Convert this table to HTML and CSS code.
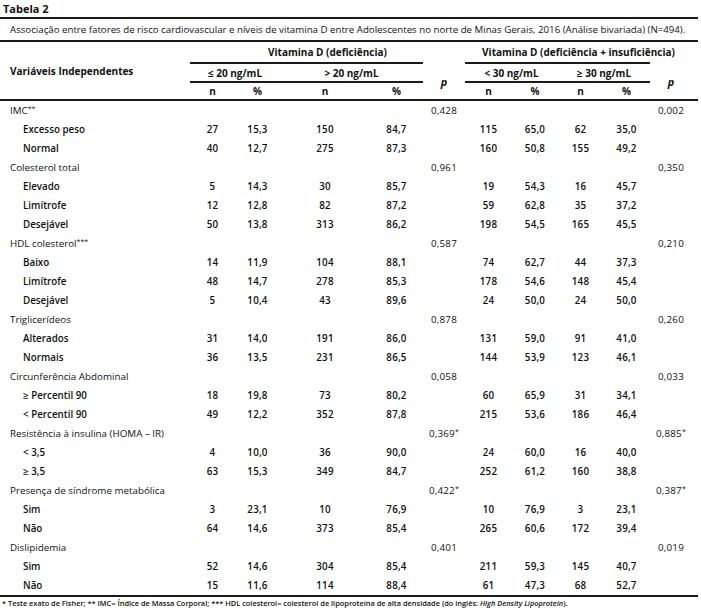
FILE: index.html
```html
<!DOCTYPE html>
<html lang="pt">
<head>
<meta charset="utf-8">
<title>Tabela 2</title>
<link rel="stylesheet" href="styles.css">
</head>
<body>
<div class="page">
  <div class="title">Tabela 2</div>
  <table class="tbl">
    <colgroup>
      <col class="c-lab"><col class="c-n1"><col class="c-p1"><col class="c-n2"><col class="c-p2"><col class="c-pv1">
      <col class="c-n3"><col class="c-p3"><col class="c-n4"><col class="c-p4"><col class="c-pv2">
    </colgroup>
    <thead>
      <tr class="cap"><th colspan="11">Associação entre fatores de risco cardiovascular e níveis de vitamina D entre Adolescentes no norte de Minas Gerais, 2016 (Análise bivariada) (N=494).</th></tr>
      <tr class="h1">
        <th rowspan="3" class="var">Variáveis Independentes</th>
        <th colspan="5">Vitamina D (deficiência)</th>
        <th colspan="5" class="last">Vitamina D (deficiência + insuficiência)</th>
      </tr>
      <tr class="h2">
        <th colspan="2" class="grp">≤ 20 ng/mL</th>
        <th colspan="2" class="grp">&gt; 20 ng/mL</th>
        <th rowspan="2" class="pcol">p</th>
        <th colspan="2" class="grp">&lt; 30 ng/mL</th>
        <th colspan="2" class="grp">≥ 30 ng/mL</th>
        <th rowspan="2" class="pcol last">p</th>
      </tr>
      <tr class="h3">
        <th>n</th><th>%</th><th>n</th><th>%</th>
        <th>n</th><th>%</th><th>n</th><th>%</th>
      </tr>
    </thead>
    <tbody>
      <tr class="cat"><td class="lab">IMC<sup>**</sup></td><td></td><td></td><td></td><td></td><td>0,428</td><td></td><td></td><td></td><td></td><td class="last">0,002</td></tr>
      <tr class="sub"><td class="lab">Excesso peso</td><td>27</td><td>15,3</td><td>150</td><td>84,7</td><td></td><td>115</td><td>65,0</td><td>62</td><td>35,0</td><td class="last"></td></tr>
      <tr class="sub"><td class="lab">Normal</td><td>40</td><td>12,7</td><td>275</td><td>87,3</td><td></td><td>160</td><td>50,8</td><td>155</td><td>49,2</td><td class="last"></td></tr>

      <tr class="cat"><td class="lab">Colesterol total</td><td></td><td></td><td></td><td></td><td>0,961</td><td></td><td></td><td></td><td></td><td class="last">0,350</td></tr>
      <tr class="sub"><td class="lab">Elevado</td><td>5</td><td>14,3</td><td>30</td><td>85,7</td><td></td><td>19</td><td>54,3</td><td>16</td><td>45,7</td><td class="last"></td></tr>
      <tr class="sub"><td class="lab">Limítrofe</td><td>12</td><td>12,8</td><td>82</td><td>87,2</td><td></td><td>59</td><td>62,8</td><td>35</td><td>37,2</td><td class="last"></td></tr>
      <tr class="sub"><td class="lab">Desejável</td><td>50</td><td>13,8</td><td>313</td><td>86,2</td><td></td><td>198</td><td>54,5</td><td>165</td><td>45,5</td><td class="last"></td></tr>

      <tr class="cat"><td class="lab">HDL colesterol<sup>***</sup></td><td></td><td></td><td></td><td></td><td>0,587</td><td></td><td></td><td></td><td></td><td class="last">0,210</td></tr>
      <tr class="sub"><td class="lab">Baixo</td><td>14</td><td>11,9</td><td>104</td><td>88,1</td><td></td><td>74</td><td>62,7</td><td>44</td><td>37,3</td><td class="last"></td></tr>
      <tr class="sub"><td class="lab">Limítrofe</td><td>48</td><td>14,7</td><td>278</td><td>85,3</td><td></td><td>178</td><td>54,6</td><td>148</td><td>45,4</td><td class="last"></td></tr>
      <tr class="sub"><td class="lab">Desejável</td><td>5</td><td>10,4</td><td>43</td><td>89,6</td><td></td><td>24</td><td>50,0</td><td>24</td><td>50,0</td><td class="last"></td></tr>

      <tr class="cat"><td class="lab">Triglicerídeos</td><td></td><td></td><td></td><td></td><td>0,878</td><td></td><td></td><td></td><td></td><td class="last">0,260</td></tr>
      <tr class="sub"><td class="lab">Alterados</td><td>31</td><td>14,0</td><td>191</td><td>86,0</td><td></td><td>131</td><td>59,0</td><td>91</td><td>41,0</td><td class="last"></td></tr>
      <tr class="sub"><td class="lab">Normais</td><td>36</td><td>13,5</td><td>231</td><td>86,5</td><td></td><td>144</td><td>53,9</td><td>123</td><td>46,1</td><td class="last"></td></tr>

      <tr class="cat"><td class="lab">Circunferência Abdominal</td><td></td><td></td><td></td><td></td><td>0,058</td><td></td><td></td><td></td><td></td><td class="last">0,033</td></tr>
      <tr class="sub"><td class="lab">≥ Percentil 90</td><td>18</td><td>19,8</td><td>73</td><td>80,2</td><td></td><td>60</td><td>65,9</td><td>31</td><td>34,1</td><td class="last"></td></tr>
      <tr class="sub"><td class="lab">&lt; Percentil 90</td><td>49</td><td>12,2</td><td>352</td><td>87,8</td><td></td><td>215</td><td>53,6</td><td>186</td><td>46,4</td><td class="last"></td></tr>

      <tr class="cat"><td class="lab">Resistência à insulina (HOMA – IR)</td><td></td><td></td><td></td><td></td><td>0,369<sup>*</sup></td><td></td><td></td><td></td><td></td><td class="last">0,885<sup>*</sup></td></tr>
      <tr class="sub"><td class="lab">&lt; 3,5</td><td>4</td><td>10,0</td><td>36</td><td>90,0</td><td></td><td>24</td><td>60,0</td><td>16</td><td>40,0</td><td class="last"></td></tr>
      <tr class="sub"><td class="lab">≥ 3,5</td><td>63</td><td>15,3</td><td>349</td><td>84,7</td><td></td><td>252</td><td>61,2</td><td>160</td><td>38,8</td><td class="last"></td></tr>

      <tr class="cat"><td class="lab">Presença de síndrome metabólica</td><td></td><td></td><td></td><td></td><td>0,422<sup>*</sup></td><td></td><td></td><td></td><td></td><td class="last">0,387<sup>*</sup></td></tr>
      <tr class="sub"><td class="lab">Sim</td><td>3</td><td>23,1</td><td>10</td><td>76,9</td><td></td><td>10</td><td>76,9</td><td>3</td><td>23,1</td><td class="last"></td></tr>
      <tr class="sub"><td class="lab">Não</td><td>64</td><td>14,6</td><td>373</td><td>85,4</td><td></td><td>265</td><td>60,6</td><td>172</td><td>39,4</td><td class="last"></td></tr>

      <tr class="cat"><td class="lab">Dislipidemia</td><td></td><td></td><td></td><td></td><td>0,401</td><td></td><td></td><td></td><td></td><td class="last">0,019</td></tr>
      <tr class="sub"><td class="lab">Sim</td><td>52</td><td>14,6</td><td>304</td><td>85,4</td><td></td><td>211</td><td>59,3</td><td>145</td><td>40,7</td><td class="last"></td></tr>
      <tr class="sub end"><td class="lab">Não</td><td>15</td><td>11,6</td><td>114</td><td>88,4</td><td></td><td>61</td><td>47,3</td><td>68</td><td>52,7</td><td class="last"></td></tr>
    </tbody>
  </table>
  <div class="foot">* Teste exato de Fisher; ** IMC= Índice de Massa Corporal; *** HDL colesterol= colesterol de lipoproteína de alta densidade (do inglês: <i>High Density Lipoprotein</i>).</div>
</div>
</body>
</html>
```
FILE: styles.css
```css
html, body {
  margin: 0;
  padding: 0;
  background: #ffffff;
}

body {
  font-family: "Open Sans", "Liberation Sans", sans-serif;
  color: #111111;
}

.page {
  width: 698px;
}

.title {
  height: 17px;
  line-height: 17px;
  padding-left: 3px;
  font-size: 11px;
  font-weight: 700;
  box-sizing: border-box;
}

.tbl {
  width: 698px;
  border-collapse: collapse;
  table-layout: fixed;
}

.c-lab { width: 190px; }
.c-n1 { width: 45px; }
.c-p1 { width: 45px; }
.c-n2 { width: 90px; }
.c-p2 { width: 53px; }
.c-pv1 { width: 42px; }
.c-n3 { width: 47px; }
.c-p3 { width: 46px; }
.c-n4 { width: 45px; }
.c-p4 { width: 47px; }
.c-pv2 { width: 48px; }

.tbl th,
.tbl td {
  padding: 0;
  text-align: center;
  white-space: nowrap;
}

.tbl .last {
  padding-right: 6px;
}

.cap th {
  height: 21px;
  border-top: 2px solid #1a1a1a;
  border-bottom: 2px solid #1a1a1a;
  text-align: left;
  padding-left: 10px;
  font-size: 9.7px;
  font-weight: 400;
}

.h1 th {
  height: 20px;
  font-size: 10px;
  font-weight: 700;
}

.h1 th.var {
  text-align: left;
  padding-left: 10px;
  border-bottom: 2px solid #1a1a1a;
}

.h2 th {
  height: 17px;
  font-size: 10px;
  font-weight: 700;
}

.h2 th.grp {
  border-top: 2px solid #1a1a1a;
  border-bottom: 2px solid #1a1a1a;
}

.h2 th.pcol {
  font-style: italic;
  font-size: 11px;
  border-bottom: 2px solid #1a1a1a;
}

.h3 th {
  height: 16px;
  font-size: 10px;
  font-weight: 700;
  border-bottom: 2px solid #1a1a1a;
}

.tbl tbody td {
  height: 19px;
  font-size: 9.8px;
  font-weight: 600;
  letter-spacing: 0.2px;
}

.tbl tbody tr.cat td {
  font-weight: 500;
}

.tbl tbody td.lab {
  text-align: left;
  letter-spacing: 0;
}

.tbl tbody tr.cat td.lab {
  padding-left: 10px;
}

.tbl tbody tr.sub td.lab {
  padding-left: 23px;
}

.tbl tbody tr.end td {
  border-bottom: 2px solid #1a1a1a;
}

.tbl sup {
  font-size: 7px;
  line-height: 0;
  vertical-align: 3px;
}

.foot {
  padding-left: 2px;
  font-size: 7.4px;
  font-weight: 600;
  line-height: 12px;
}
```
